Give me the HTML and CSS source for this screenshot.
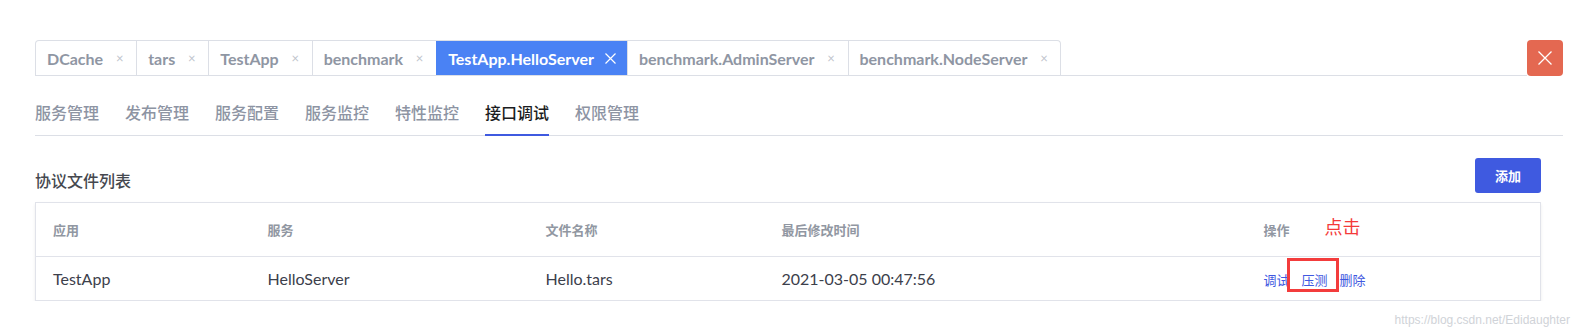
FILE: index.html
```html
<!DOCTYPE html>
<html lang="zh-CN">
<head>
    <meta charset="UTF-8">
    <meta name="viewport" content="width=device-width, initial-scale=1.0">
    <title>接口调试</title>
    <link rel="stylesheet" href="styles.css">
</head>
<body>
    <div class="page">
        <div class="top-bar">
            <div class="tabs">
                <div class="tab-list">
                    <div class="tab">DCache <span class="tab-close">&times;</span></div>
                    <div class="tab">tars <span class="tab-close">&times;</span></div>
                    <div class="tab">TestApp <span class="tab-close">&times;</span></div>
                    <div class="tab">benchmark <span class="tab-close">&times;</span></div>
                    <div class="tab active">TestApp.HelloServer
                        <span class="tab-close">
                            <svg width="11" height="11" viewBox="0 0 11 11"><path d="M0.5 0.5L10.5 10.5M10.5 0.5L0.5 10.5" stroke="#fff" stroke-width="1.2"/></svg>
                        </span>
                    </div>
                    <div class="tab">benchmark.AdminServer <span class="tab-close">&times;</span></div>
                    <div class="tab">benchmark.NodeServer <span class="tab-close">&times;</span></div>
                </div>
            </div>
            <button class="close-all">
                <svg width="14" height="14" viewBox="0 0 14 14"><path d="M0.5 0.5L13.5 13.5M13.5 0.5L0.5 13.5" stroke="#fff" stroke-width="1.3"/></svg>
            </button>
        </div>

        <div class="subnav">
            <a class="subnav-item">服务管理</a>
            <a class="subnav-item">发布管理</a>
            <a class="subnav-item">服务配置</a>
            <a class="subnav-item">服务监控</a>
            <a class="subnav-item">特性监控</a>
            <a class="subnav-item active">接口调试</a>
            <a class="subnav-item">权限管理</a>
        </div>

        <div class="content">
            <div class="section-head">
                <h3 class="section-title">协议文件列表</h3>
                <button class="btn-primary">添加</button>
            </div>

            <table class="file-table">
                <colgroup>
                    <col style="width: 215px">
                    <col style="width: 278px">
                    <col style="width: 236px">
                    <col style="width: 482px">
                    <col>
                </colgroup>
                <thead>
                    <tr>
                        <th>应用</th>
                        <th>服务</th>
                        <th>文件名称</th>
                        <th>最后修改时间</th>
                        <th>操作<span class="note">点击</span></th>
                    </tr>
                </thead>
                <tbody>
                    <tr>
                        <td>TestApp</td>
                        <td>HelloServer</td>
                        <td>Hello.tars</td>
                        <td>2021-03-05 00:47:56</td>
                        <td>
                            <a class="op-link">调试</a><a class="op-link marked">压测</a><a class="op-link">删除</a>
                        </td>
                    </tr>
                </tbody>
            </table>
        </div>
    </div>

    <div class="watermark">https://blog.csdn.net/Edidaughter</div>
</body>
</html>
```

FILE: styles.css
```css
body {
    margin: 0;
    font-family: Lato, "Noto Sans CJK SC", sans-serif;
    background-color: #fff;
    color: #3a3f4b;
}
.page {
    padding: 40px 27px 0 35px;
}
.top-bar {
    display: flex;
    align-items: flex-start;
}
.tabs {
    flex: 1;
    border-bottom: 1px solid #dcdfe6;
}
.tab-list {
    display: inline-flex;
    border: 1px solid #dcdfe6;
    border-bottom: none;
    border-radius: 4px 4px 0 0;
    overflow: hidden;
}
.tab {
    display: flex;
    align-items: center;
    height: 34px;
    padding: 0 11px;
    font-size: 16px;
    font-weight: bold;
    color: #8f96a3;
    border-left: 1px solid #dcdfe6;
}
.tab:first-child {
    border-left: none;
}
.tab.active {
    background-color: #4a82f4;
    border-left-color: #4a82f4;
    color: #fff;
}
.tab-close {
    display: inline-flex;
    justify-content: center;
    align-items: center;
    width: 11px;
    margin-left: 11px;
    font-size: 13px;
    font-weight: normal;
    color: #c0c4cc;
}
.close-all {
    width: 36px;
    height: 36px;
    padding: 0;
    border: none;
    border-radius: 4px;
    background-color: #e46851;
    display: flex;
    justify-content: center;
    align-items: center;
}

.subnav {
    display: flex;
    gap: 26px;
    margin-top: 25px;
    border-bottom: 1px solid #dcdfe6;
}
.subnav-item {
    font-size: 16px;
    line-height: 24px;
    padding-bottom: 9px;
    font-weight: 500;
    color: #8d94a3;
    border-bottom: 2px solid transparent;
    margin-bottom: -1px;
}
.subnav-item.active {
    color: #1b1c21;
    border-bottom-color: #3f5ae0;
}

.content {
    margin-right: 22px;
}
.section-head {
    display: flex;
    justify-content: space-between;
    align-items: flex-end;
    margin-top: 22px;
}
.section-title {
    margin: 0;
    font-size: 16px;
    line-height: 24px;
    font-weight: 500;
    color: #45484f;
}
.btn-primary {
    width: 66px;
    height: 35px;
    border: none;
    border-radius: 3px;
    background-color: #3f5ae0;
    color: #fff;
    font-family: inherit;
    font-size: 13px;
    font-weight: bold;
}

.file-table {
    width: 100%;
    margin-top: 9px;
    table-layout: fixed;
    border-collapse: collapse;
    border: 1px solid #e1e3ea;
    box-shadow: 0 2px 3px rgba(0, 0, 0, 0.08);
}
.file-table th {
    height: 53px;
    padding: 0 0 0 17px;
    text-align: left;
    font-size: 13px;
    font-weight: bold;
    color: #9197a2;
    border-bottom: 1px solid #e1e3ea;
}
.file-table td {
    height: 43px;
    padding: 0 0 0 17px;
    font-size: 16px;
    color: #3c404b;
}
.note {
    margin-left: 35px;
    font-size: 18px;
    line-height: 0;
    font-weight: normal;
    color: #f43a3a;
    vertical-align: 1px;
}
.op-link {
    position: relative;
    font-size: 13px;
    color: #4058e0;
    margin-right: 12px;
    cursor: pointer;
}
.marked::after {
    content: "";
    position: absolute;
    left: -15px;
    right: -11px;
    top: -14px;
    bottom: -4px;
    border: 3px solid #f33c3c;
}

.watermark {
    position: absolute;
    right: 20px;
    top: 313px;
    font-family: "Liberation Sans", sans-serif;
    font-size: 12px;
    color: #d0d3d8;
}
```
